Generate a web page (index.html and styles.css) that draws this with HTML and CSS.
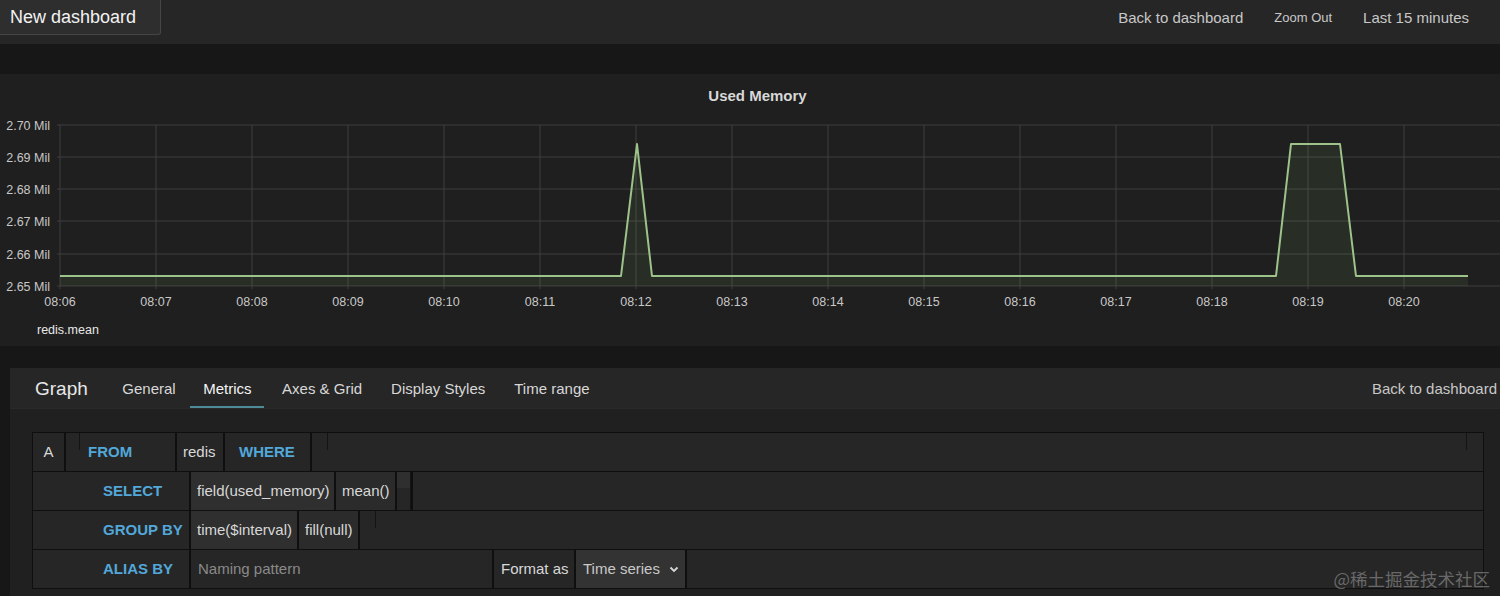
FILE: index.html
```html
<!DOCTYPE html>
<html lang="en">
<head>
    <meta charset="UTF-8">
    <meta name="viewport" content="width=device-width, initial-scale=1.0">
    <title>New dashboard - Edit panel</title>
    <link rel="stylesheet" href="styles.css">
</head>
<body>
    <header class="topbar">
        <div class="dash-title">New dashboard</div>
        <nav class="top-links">
            <a href="#">Back to dashboard</a>
            <a href="#" class="small">Zoom Out</a>
            <a href="#">Last 15 minutes</a>
        </nav>
    </header>

    <section class="chart-panel">
        <div class="chart-title">Used Memory</div>
        <svg class="chart" viewBox="0 0 1500 205" width="1500" height="205">
            <g class="grid">
                <line x1="57" y1="20" x2="1500" y2="20"/>
                <line x1="57" y1="52" x2="1500" y2="52"/>
                <line x1="57" y1="84" x2="1500" y2="84"/>
                <line x1="57" y1="116" x2="1500" y2="116"/>
                <line x1="57" y1="149" x2="1500" y2="149"/>
                <line x1="57" y1="181" x2="1500" y2="181"/>
                <line x1="60" y1="20" x2="60" y2="184"/>
                <line x1="156" y1="20" x2="156" y2="184"/>
                <line x1="252" y1="20" x2="252" y2="184"/>
                <line x1="348" y1="20" x2="348" y2="184"/>
                <line x1="444" y1="20" x2="444" y2="184"/>
                <line x1="540" y1="20" x2="540" y2="184"/>
                <line x1="636" y1="20" x2="636" y2="184"/>
                <line x1="732" y1="20" x2="732" y2="184"/>
                <line x1="828" y1="20" x2="828" y2="184"/>
                <line x1="924" y1="20" x2="924" y2="184"/>
                <line x1="1020" y1="20" x2="1020" y2="184"/>
                <line x1="1116" y1="20" x2="1116" y2="184"/>
                <line x1="1212" y1="20" x2="1212" y2="184"/>
                <line x1="1308" y1="20" x2="1308" y2="184"/>
                <line x1="1404" y1="20" x2="1404" y2="184"/>
            </g>
            <g class="y-labels">
                <text x="50" y="25">2.70 Mil</text>
                <text x="50" y="57">2.69 Mil</text>
                <text x="50" y="89">2.68 Mil</text>
                <text x="50" y="121">2.67 Mil</text>
                <text x="50" y="154">2.66 Mil</text>
                <text x="50" y="186">2.65 Mil</text>
            </g>
            <g class="x-labels">
                <text x="60" y="201">08:06</text>
                <text x="156" y="201">08:07</text>
                <text x="252" y="201">08:08</text>
                <text x="348" y="201">08:09</text>
                <text x="444" y="201">08:10</text>
                <text x="540" y="201">08:11</text>
                <text x="636" y="201">08:12</text>
                <text x="732" y="201">08:13</text>
                <text x="828" y="201">08:14</text>
                <text x="924" y="201">08:15</text>
                <text x="1020" y="201">08:16</text>
                <text x="1116" y="201">08:17</text>
                <text x="1212" y="201">08:18</text>
                <text x="1308" y="201">08:19</text>
                <text x="1404" y="201">08:20</text>
            </g>
            <polygon class="series-fill" points="60,171 621,171 637,39 652,171 1276,171 1291,39 1340,39 1356,171 1468,171 1468,181 60,181"/>
            <polyline class="series" points="60,171 621,171 637,39 652,171 1276,171 1291,39 1340,39 1356,171 1468,171"/>
        </svg>
        <div class="legend">redis.mean</div>
    </section>

    <section class="editor">
        <div class="tabs">
            <span class="panel-type">Graph</span>
            <a href="#" class="tab">General</a>
            <a href="#" class="tab active">Metrics</a>
            <a href="#" class="tab">Axes &amp; Grid</a>
            <a href="#" class="tab">Display Styles</a>
            <a href="#" class="tab">Time range</a>
            <a href="#" class="tab back">Back to dashboard</a>
        </div>

        <div class="query">
            <div class="q-row">
                <div class="cell ref">A</div>
                <div class="cell kw from"><span class="tick"></span>FROM</div>
                <div class="cell measurement">redis</div>
                <div class="cell kw where">WHERE</div>
                <div class="cell filler"><span class="tick first"></span><span class="tick last"></span></div>
            </div>
            <div class="q-row">
                <div class="cell kw label">SELECT</div>
                <div class="cell part field">field(used_memory)</div>
                <div class="cell part alt fn">mean()</div>
                <div class="cell stub"></div>
                <div class="cell filler"></div>
            </div>
            <div class="q-row">
                <div class="cell kw label">GROUP BY</div>
                <div class="cell part interval">time($interval)</div>
                <div class="cell part alt fn">fill(null)</div>
                <div class="cell filler"><span class="tick first"></span></div>
            </div>
            <div class="q-row">
                <div class="cell kw label">ALIAS BY</div>
                <input class="cell alias" type="text" placeholder="Naming pattern">
                <div class="cell format">Format as</div>
                <div class="cell select">Time series
                    <svg class="chevron" viewBox="0 0 10 10" width="10" height="10"><path d="M1.5 3.5 L5 7 L8.5 3.5" fill="none" stroke="#d8d8d8" stroke-width="1.8"/></svg>
                </div>
                <div class="cell filler"></div>
            </div>
        </div>
    </section>

    <div class="watermark">@稀土掘金技术社区</div>
</body>
</html>
```

FILE: styles.css
```css
body {
    font-family: "Liberation Sans", Arial, sans-serif;
    background-color: #171717;
    color: #d8d8d8;
    margin: 0;
    padding: 0;
    width: 1500px;
    height: 596px;
    overflow: hidden;
    position: relative;
}
a {
    color: inherit;
    text-decoration: none;
}
.topbar {
    height: 44px;
    background-color: #262626;
    display: flex;
    justify-content: space-between;
    align-items: flex-start;
    margin-bottom: 30px;
}
.dash-title {
    box-sizing: border-box;
    width: 161px;
    height: 35px;
    padding-left: 10px;
    line-height: 34px;
    font-size: 18px;
    color: #f2f2f2;
    background-color: #2e2e2e;
    border-right: 1px solid #454545;
    border-bottom: 1px solid #454545;
    border-bottom-right-radius: 3px;
}
.top-links {
    display: flex;
    gap: 31px;
    padding-right: 31px;
    line-height: 35px;
    font-size: 15px;
    color: #c8c8c8;
}
.top-links .small {
    font-size: 13px;
}
.chart-panel {
    height: 272px;
    box-sizing: border-box;
    padding-top: 13px;
    background-color: #1f1f1f;
    margin-bottom: 22px;
}
.chart-title {
    text-align: center;
    font-size: 15px;
    font-weight: bold;
    line-height: 18px;
    color: #d8d8d8;
    padding-left: 15px;
}
.chart {
    display: block;
}
.chart .grid line {
    stroke: #3e3e3e;
    stroke-width: 1;
}
.chart text {
    font-family: "Liberation Sans", Arial, sans-serif;
    font-size: 12.5px;
    fill: #c8c8c8;
}
.chart .y-labels text {
    text-anchor: end;
}
.chart .x-labels text {
    text-anchor: middle;
}
.series {
    fill: none;
    stroke: #9dc38a;
    stroke-width: 2;
    stroke-linejoin: round;
}
.series-fill {
    fill: rgba(126, 178, 109, 0.1);
}
.legend {
    padding: 12px 0 0 37px;
    font-size: 12.5px;
    line-height: 16px;
    color: #e8e8e8;
}
.editor {
    margin-left: 10px;
    height: 228px;
    background-color: #202020;
}
.tabs {
    height: 41px;
    display: flex;
    align-items: stretch;
    padding-left: 25px;
    background-color: #262626;
    border-bottom: 1px solid #2a2a2a;
    box-sizing: border-box;
}
.panel-type {
    font-size: 19px;
    line-height: 41px;
    color: #e8e8e8;
    margin-right: 20px;
}
.tab {
    padding: 0 14.5px;
    font-size: 15px;
    line-height: 41px;
    color: #d8d8d8;
}
.tab.active {
    color: #f4f4f4;
    box-shadow: inset 0 -2px #4e8a98;
    padding: 0 12px 0 13px;
    margin-right: 4px;
}
.tab.back {
    margin-left: auto;
    padding: 0 3px 0 0;
    color: #c8c8c8;
}
.query {
    margin: 23px 16px 0 22px;
    border: 1px solid #0f0f0f;
    background-color: #0f0f0f;
    display: flex;
    flex-direction: column;
    gap: 1px;
}
.q-row {
    display: flex;
    gap: 2px;
    height: 38px;
}
.cell {
    box-sizing: border-box;
    height: 38px;
    line-height: 38px;
    padding: 0 7px;
    font-size: 15px;
    color: #d8d8d8;
    background-color: #262626;
    white-space: nowrap;
    position: relative;
}
.cell.ref {
    width: 31px;
    text-align: center;
    padding: 0;
}
.kw {
    font-weight: bold;
    color: #52a8da;
}
.cell.from {
    width: 109px;
    padding-left: 22px;
}
.cell.measurement {
    width: 46px;
    padding: 0 6px;
}
.cell.where {
    width: 85px;
    padding-left: 14px;
}
.cell.label {
    width: 156px;
    padding-left: 70px;
}
.cell.part {
    background-color: #2f2f2f;
}
.cell.part.alt {
    background-color: #2b2b2b;
}
.cell.field {
    width: 143px;
    padding: 0 6px;
}
.cell.interval {
    width: 106px;
    padding: 0 6px;
}
.cell.fn {
    width: 59px;
    padding: 0 6px;
}
.cell.stub {
    width: 14px;
    padding: 0;
    background: linear-gradient(#2f2f2f 0 16px, #262626 16px);
    border-right: 1px solid #141414;
}
.cell.filler {
    flex: 1;
    display: flex;
    padding: 0;
}
.tick {
    display: block;
    width: 1px;
    height: 17px;
    background-color: #141414;
}
.from .tick {
    position: absolute;
    left: 13px;
    top: 0;
}
.filler .tick.first {
    margin-left: 15px;
}
.filler .tick.last {
    margin-left: auto;
    margin-right: 16px;
}
.cell.alias {
    width: 301px;
    border: none;
    outline: none;
    font-family: inherit;
    font-size: 15px;
    padding-left: 7px;
    margin: 0;
}
.cell.alias::placeholder {
    color: #8a8a8a;
}
.cell.format {
    width: 80px;
}
.cell.select {
    width: 109px;
    background-color: #333333;
    display: flex;
    justify-content: space-between;
    align-items: center;
    color: #c8c8c8;
    padding-right: 6px;
}
.watermark {
    position: absolute;
    right: 10px;
    bottom: 5px;
    font-family: "Noto Sans CJK SC", sans-serif;
    font-size: 17.5px;
    color: rgba(190, 190, 190, 0.45);
}
```
